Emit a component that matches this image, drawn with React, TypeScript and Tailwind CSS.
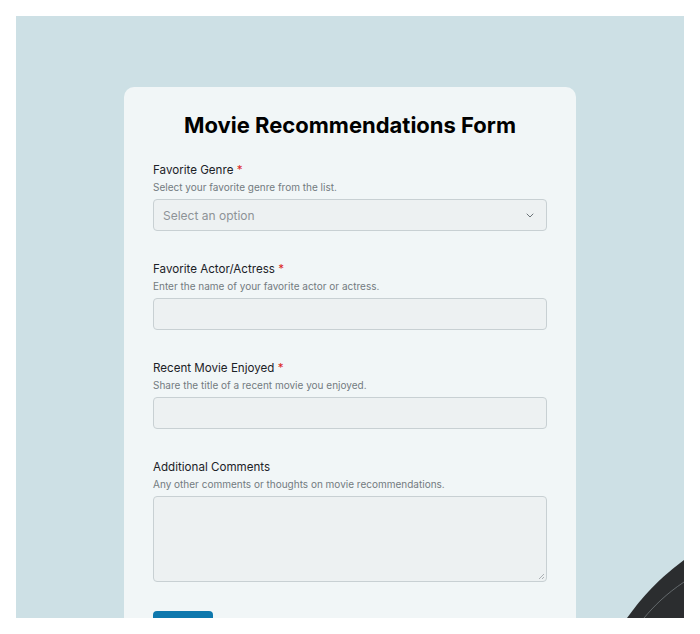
import React from "react";

function Field({
  label,
  desc,
  required,
  children,
}: {
  label: string;
  desc: string;
  required?: boolean;
  children: React.ReactNode;
}) {
  return (
    <div className="flex flex-col">
      <div className="text-[11.6px] leading-[16px] text-[#1c2227]">
        {label}
        {required && <span className="text-[#dc2626]"> *</span>}
      </div>
      <div className="mt-[2px] text-[10px] leading-[14px] text-[#737b80]">{desc}</div>
      <div className="mt-[5px]">{children}</div>
    </div>
  );
}

export default function App() {
  return (
    <div className="bg-white p-4 w-[700px] h-[634px]" style={{ fontFamily: "Inter, 'Noto Sans', sans-serif" }}>
      <div className="relative h-[602px] overflow-hidden bg-[#cde0e5]">
        <svg className="absolute right-0 bottom-0" width="70" height="70" viewBox="0 0 70 70">
          <path d="M13 70 C 24 55, 38 36, 70 12 L 70 70 Z" fill="#2b2d2f" />
          <path d="M30 70 C 40 58, 52 46, 70 34" stroke="#8a9296" strokeWidth="0.6" fill="none" />
        </svg>
        <div className="relative mx-auto mt-[71px] w-[452px] rounded-[10px] bg-[#f1f6f7] px-[29px] pt-6 pb-10">
          <h1 className="text-center text-[22px] leading-[28px] font-bold text-black">
            Movie Recommendations Form
          </h1>
          <div className="mt-[23px] flex flex-col gap-[30px]">
            <Field label="Favorite Genre" desc="Select your favorite genre from the list." required>
              <div className="flex h-[32px] items-center justify-between rounded-[4px] border border-[#c8d0d3] bg-[#edf1f2] pl-[9px] pr-[12px]">
                <span className="text-[12px] pt-[1px] text-[#8d9397]">Select an option</span>
                <svg width="8" height="5" viewBox="0 0 8 5">
                  <path d="M1 1 L4 4 L7 1" stroke="#6b7378" strokeWidth="1" fill="none" strokeLinecap="round" strokeLinejoin="round" />
                </svg>
              </div>
            </Field>
            <Field label="Favorite Actor/Actress" desc="Enter the name of your favorite actor or actress." required>
              <div className="h-[32px] rounded-[4px] border border-[#c8d0d3] bg-[#edf1f2]" />
            </Field>
            <Field label="Recent Movie Enjoyed" desc="Share the title of a recent movie you enjoyed." required>
              <div className="h-[32px] rounded-[4px] border border-[#c8d0d3] bg-[#edf1f2]" />
            </Field>
            <Field label="Additional Comments" desc="Any other comments or thoughts on movie recommendations.">
              <div className="relative h-[86px] rounded-[4px] border border-[#c8d0d3] bg-[#edf1f2]">
                <svg className="absolute right-[1px] bottom-[1px]" width="7" height="7" viewBox="0 0 7 7">
                  <path d="M6 1 L1 6 M6 4 L4 6" stroke="#9aa1a5" strokeWidth="0.8" />
                </svg>
              </div>
            </Field>
            <div className="-mt-[1px] h-[36px] w-[60px] rounded-[4px] bg-[#0e78ad]" />
          </div>
        </div>
      </div>
    </div>
  );
}
